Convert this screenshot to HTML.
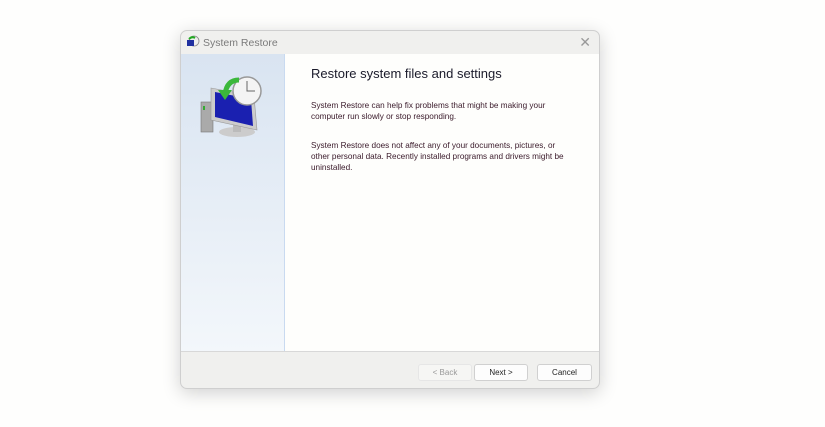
<!DOCTYPE html>
<html><head><meta charset="utf-8"><style>
body{margin:0;width:825px;height:427px;background:#fefefd;font-family:"Liberation Sans",sans-serif;position:relative;overflow:hidden}
.win{position:absolute;left:180px;top:30px;width:418px;height:357px;background:#f0f0ee;border:1px solid #cfcfcf;border-radius:7px;box-shadow:0 4px 18px rgba(0,0,0,.18);overflow:hidden}
.title{position:absolute;left:22px;top:6px;font-size:10.5px;color:#7a7a7a}
.x{position:absolute;right:8px;top:3px;font-size:14px;color:#999;font-weight:300}
.content{position:absolute;left:0;top:23px;width:418px;height:297px;background:#fefefc;border-bottom:1px solid #d8d8d8}
.side{position:absolute;left:0;top:0;width:103px;height:297px;background:linear-gradient(#d9e4f1,#f3f7fb);border-right:1px solid #c9daf0}
h1{position:absolute;left:130px;top:12px;margin:0;font-weight:normal;font-size:13px;color:#1a1a2a}
p{position:absolute;left:130px;margin:0;font-size:8.2px;line-height:11px;color:#3a1a2a;width:255px}
.btn{position:absolute;top:333px;height:15px;border:1px solid #d0d0d0;border-radius:3px;background:#fdfdfd;font-size:8px;text-align:center;line-height:15px;color:#222}
</style></head><body>
<div class="win">
<svg style="position:absolute;left:5px;top:4px" width="14" height="14" viewBox="0 0 14 14"><circle cx="8" cy="6" r="5" fill="#eee" stroke="#888" stroke-width=".8"/><rect x="1" y="5" width="7" height="6" fill="#2030a0"/><path d="M3 4 Q6 1 9 3" stroke="#2a2" stroke-width="2" fill="none"/></svg>
<div class="title">System Restore</div>
<div class="x">✕</div>
<div class="content">
<div class="side">
<svg style="position:absolute;left:18px;top:20px" width="70" height="65" viewBox="0 0 70 65">
<rect x="2" y="28" width="12" height="30" fill="#aaa" stroke="#777" stroke-width=".6"/>
<rect x="4" y="32" width="2" height="4" fill="#3a3"/>
<ellipse cx="38" cy="58" rx="18" ry="5" fill="#ccc"/>
<rect x="34" y="48" width="8" height="10" fill="#bbb"/>
<polygon points="12,14 55,22 58,56 12,46" fill="#ccc" stroke="#999" stroke-width=".6"/>
<polygon points="16,18 52,25 54,52 16,43" fill="#1a20b0"/>
<circle cx="48" cy="17" r="14" fill="#f4f4f4" stroke="#999" stroke-width="1.5"/>
<path d="M48 7 V17 H56" stroke="#666" stroke-width="1" fill="none"/>
<path d="M40 6 Q28 6 26 20" stroke="#3bb83b" stroke-width="5" fill="none"/>
<polygon points="19,16 33,16 26,26" fill="#3bb83b"/>
</svg>
</div>
<h1>Restore system files and settings</h1>
<p style="top:46px">System Restore can help fix problems that might be making your computer run slowly or stop responding.</p>
<p style="top:86px">System Restore does not affect any of your documents, pictures, or other personal data. Recently installed programs and drivers might be uninstalled.</p>
</div>
<div class="btn" style="left:237px;width:52px;color:#999;background:#f6f6f4;border-color:#e6e6e6">&lt; Back</div>
<div class="btn" style="left:293px;width:52px">Next &gt;</div>
<div class="btn" style="left:356px;width:53px">Cancel</div>
</div>
</body></html>
